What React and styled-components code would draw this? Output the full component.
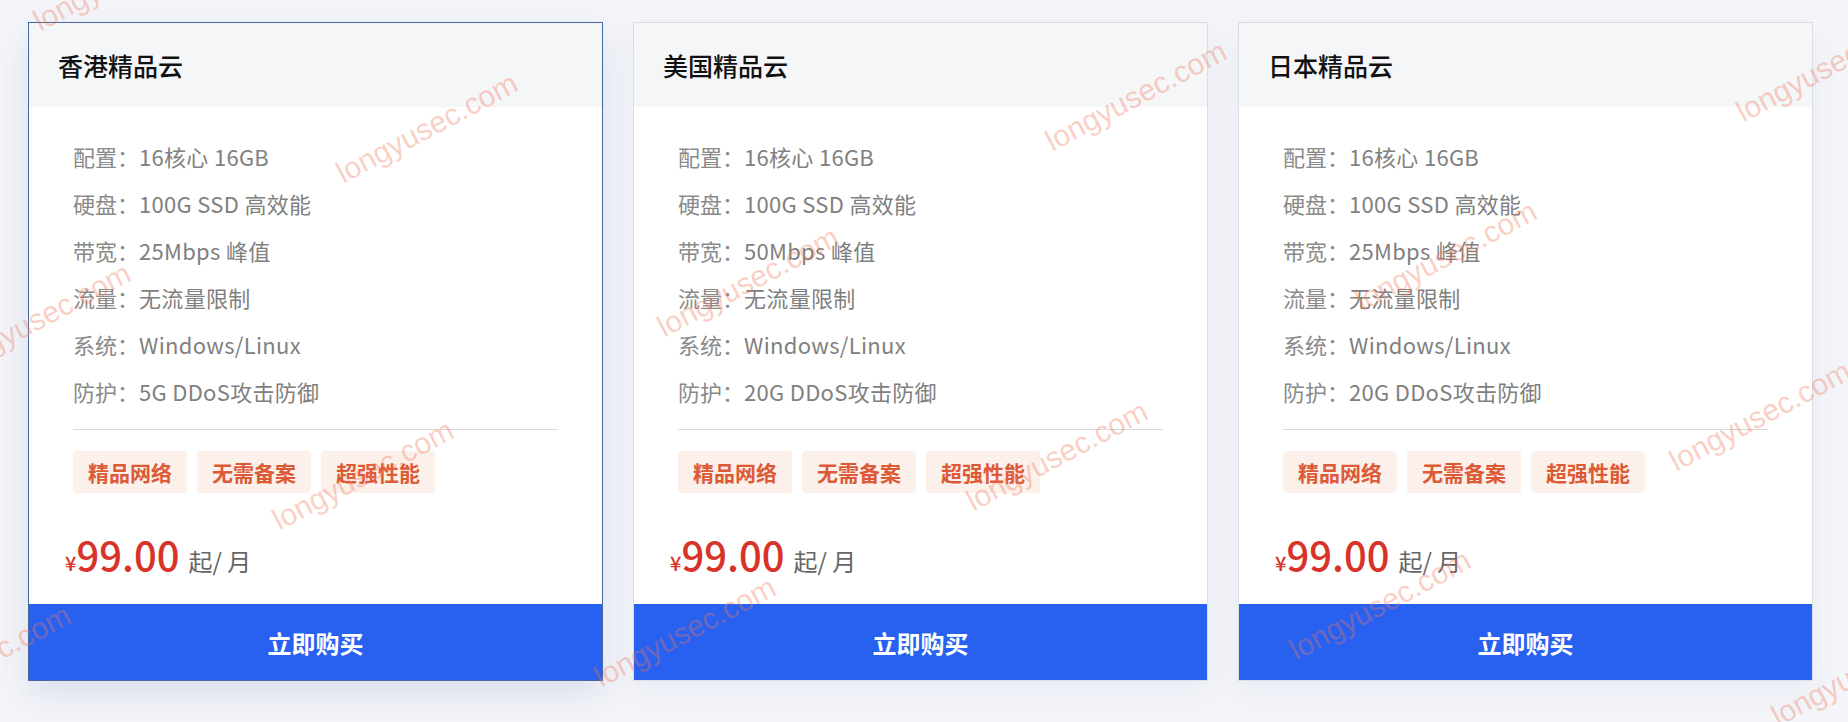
import React from "react";
import styled, { createGlobalStyle } from "styled-components";

const plans = [
  {
    name: "香港精品云",
    active: true,
    specs: [
      ["配置", "16核心 16GB"],
      ["硬盘", "100G SSD 高效能"],
      ["带宽", "25Mbps 峰值"],
      ["流量", "无流量限制"],
      ["系统", "Windows/Linux"],
      ["防护", "5G DDoS攻击防御"],
    ],
  },
  {
    name: "美国精品云",
    specs: [
      ["配置", "16核心 16GB"],
      ["硬盘", "100G SSD 高效能"],
      ["带宽", "50Mbps 峰值"],
      ["流量", "无流量限制"],
      ["系统", "Windows/Linux"],
      ["防护", "20G DDoS攻击防御"],
    ],
  },
  {
    name: "日本精品云",
    specs: [
      ["配置", "16核心 16GB"],
      ["硬盘", "100G SSD 高效能"],
      ["带宽", "25Mbps 峰值"],
      ["流量", "无流量限制"],
      ["系统", "Windows/Linux"],
      ["防护", "20G DDoS攻击防御"],
    ],
  },
];

const tags = ["精品网络", "无需备案", "超强性能"];

// site stamp, centre points
const marks = [
  [124, -24],
  [427, 128],
  [40, 318],
  [363, 475],
  [-20, 660],
  [685, 632],
  [748, 282],
  [1136, 96],
  [1057, 456],
  [1380, 605],
  [1446, 256],
  [1827, 67],
  [1760, 416],
  [1862, 671],
];

function App() {
  return (
    <>
      <GlobalStyle />
      <Page>
        <Grid>
          {plans.map((plan) => (
            <Card key={plan.name} $active={plan.active}>
              <Header>{plan.name}</Header>
              <Body>
                <SpecList>
                  {plan.specs.map(([label, value]) => (
                    <Spec key={label}>
                      {label}：<SpecValue>{value}</SpecValue>
                    </Spec>
                  ))}
                </SpecList>
                <Divider />
                <Tags>
                  {tags.map((t) => (
                    <Tag key={t}>{t}</Tag>
                  ))}
                </Tags>
              </Body>
              <Price>
                <Currency>¥</Currency>
                <Amount>99.00</Amount>
                <Unit>起/ 月</Unit>
              </Price>
              <BuyButton>立即购买</BuyButton>
            </Card>
          ))}
        </Grid>
        {marks.map(([x, y], i) => (
          <Watermark key={i} style={{ left: x, top: y }}>
            longyusec.com
          </Watermark>
        ))}
      </Page>
    </>
  );
}

const GlobalStyle = createGlobalStyle`
  html, body {
    margin: 0;
    padding: 0;
    background: #f4f5f9;
    font-family: "Noto Sans CJK SC", "Noto Sans", sans-serif;
  }
`;

const Page = styled.div`
  position: relative;
  width: 1848px;
  height: 722px;
  overflow: hidden;
  background: #f4f5f9;
`;

const Grid = styled.div`
  display: grid;
  grid-template-columns: repeat(3, 575px);
  column-gap: 30px;
  padding: 22px 0 0 28px;
`;

const Card = styled.div`
  box-sizing: border-box;
  height: 659px;
  display: flex;
  flex-direction: column;
  background: #fff;
  border: 1px solid ${(p) => (p.$active ? "#45699e" : "#dcdee5")};
  box-shadow: ${(p) =>
    p.$active
      ? "0 14px 32px rgba(40, 70, 150, 0.12)"
      : "0 12px 30px rgba(40, 70, 150, 0.06)"};
`;

const Header = styled.div`
  height: 84px;
  flex: none;
  display: flex;
  align-items: center;
  padding-left: 29px;
  background: #f5f6f8;
  color: #111;
  font-size: 25px;
  font-weight: 500;
`;

const Body = styled.div`
  padding: 26px 44px 0 44px;
`;

const SpecList = styled.div`
  display: flex;
  flex-direction: column;
`;

const Spec = styled.div`
  line-height: 47px;
  font-size: 22px;
  color: #8a8a8a;
  white-space: nowrap;
`;

const SpecValue = styled.span`
  color: #808080;
  letter-spacing: 0.3px;
`;

const Divider = styled.div`
  height: 1px;
  margin-top: 14px;
  background: #d9d9d9;
`;

const Tags = styled.div`
  display: flex;
  gap: 10px;
  margin-top: 21px;
`;

const Tag = styled.span`
  height: 42px;
  display: inline-flex;
  align-items: center;
  padding: 0 15px;
  border-radius: 4px;
  background: #fbf0ea;
  color: #dd5a37;
  font-size: 21px;
  font-weight: 700;
`;

const Price = styled.div`
  display: flex;
  align-items: baseline;
  margin-top: 41px;
  padding-left: 36px;
  line-height: 1;
  color: #d8332a;
`;

const Currency = styled.span`
  font-size: 20px;
  font-weight: 500;
`;

const Amount = styled.span`
  font-size: 40px;
  font-weight: 500;
`;

const Unit = styled.span`
  margin-left: 9px;
  font-size: 24px;
  color: #666;
`;

const BuyButton = styled.div`
  margin-top: auto;
  height: 76px;
  flex: none;
  display: flex;
  align-items: center;
  justify-content: center;
  background: #2860f0;
  color: #fff;
  font-size: 24px;
  font-weight: 700;
`;

const Watermark = styled.div`
  position: absolute;
  transform: translate(-50%, -50%) rotate(-28deg);
  font-family: "Liberation Sans", sans-serif;
  font-size: 30px;
  font-weight: 400;
  color: rgba(240, 120, 90, 0.36);
  white-space: nowrap;
  pointer-events: none;
`;

export default App;
